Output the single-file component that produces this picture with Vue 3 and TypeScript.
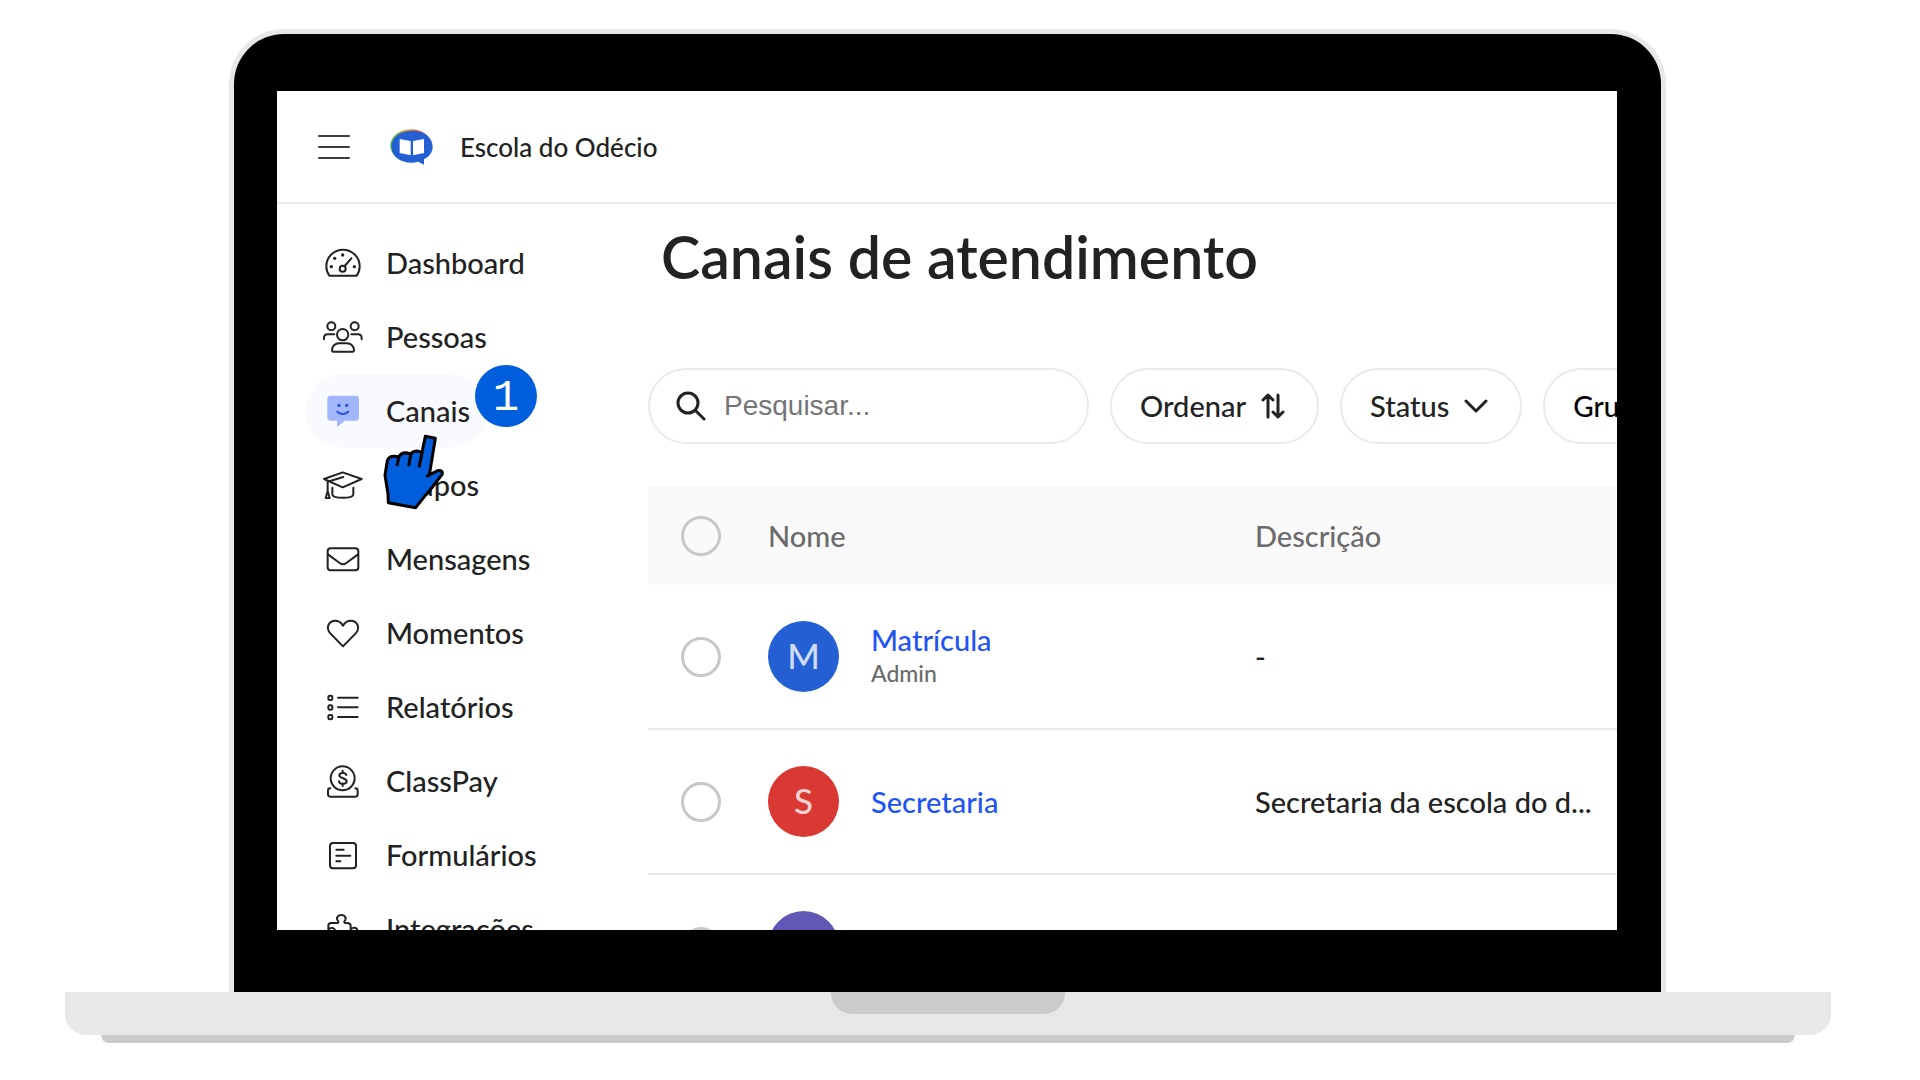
<script setup lang="ts">
import { ref } from 'vue'

interface NavItem {
  id: string
  label: string
}

interface Channel {
  initial: string
  name: string
  role?: string
  description: string
  tone: string
}

const activeId = ref('canais')
const search = ref('')

const navItems: NavItem[] = [
  { id: 'dashboard', label: 'Dashboard' },
  { id: 'pessoas', label: 'Pessoas' },
  { id: 'canais', label: 'Canais' },
  { id: 'grupos', label: 'Grupos' },
  { id: 'mensagens', label: 'Mensagens' },
  { id: 'momentos', label: 'Momentos' },
  { id: 'relatorios', label: 'Relatórios' },
  { id: 'classpay', label: 'ClassPay' },
  { id: 'formularios', label: 'Formulários' },
  { id: 'integracoes', label: 'Integrações' },
]

const channels: Channel[] = [
  { initial: 'M', name: 'Matrícula', role: 'Admin', description: '-', tone: 'blue' },
  { initial: 'S', name: 'Secretaria', description: 'Secretaria da escola do d...', tone: 'red' },
  { initial: '', name: '', description: '', tone: 'purple' },
]
</script>

<template>
  <div class="stage">
    <div class="lid">
      <div class="screen">
        <header class="topbar">
          <button class="menu" type="button" aria-label="Menu">
            <svg viewBox="0 0 32 26" width="32" height="26" stroke="#3c3c3c" stroke-width="2" stroke-linecap="round">
              <path d="M1 2H31M1 13H31M1 24H31" />
            </svg>
          </button>
          <svg class="logo" viewBox="0 0 129 108" width="43" height="36" aria-hidden="true">
            <defs>
              <linearGradient id="rim" x1="0" x2="1">
                <stop offset="0" stop-color="#35a853" />
                <stop offset="0.4" stop-color="#e5a62c" />
                <stop offset="0.75" stop-color="#d9402f" />
                <stop offset="1" stop-color="#245fd3" />
              </linearGradient>
            </defs>
            <ellipse cx="63" cy="50" rx="62" ry="49" fill="url(#rim)" />
            <path d="M66 5C101 5 128 24 128 53C128 69 118 83 102 91V107L84 98C78 100 72 101 66 101C30 101 5 81 5 53C5 25 31 5 66 5Z" fill="#245fd3" />
            <path d="M29 30L62 36V79L29 72ZM102 30L69 36V79L102 72Z" fill="#fff" />
          </svg>
          <span class="school">Escola do Odécio</span>
        </header>

        <div class="body">
          <nav class="sidebar">
            <a
              v-for="item in navItems"
              :key="item.id"
              href="#"
              class="nav-item"
              :class="{ active: item.id === activeId }"
              @click.prevent="activeId = item.id"
            >
              <svg class="nav-icon" viewBox="0 0 120 120" aria-hidden="true">
                <g v-if="item.id === 'dashboard'">
                  <path d="M19 98C13 90 10 81 10 70A50 50 0 0 1 110 70C110 81 107 90 101 98Z" />
                  <circle cx="59" cy="77" r="9" />
                  <path d="M65 69L85 46" />
                  <g class="solid">
                    <circle cx="25" cy="71" r="5" /><circle cx="35" cy="46" r="5" />
                    <circle cx="59" cy="36" r="5" /><circle cx="94" cy="71" r="5" />
                  </g>
                </g>
                <g v-else-if="item.id === 'pessoas'">
                  <circle cx="25" cy="28" r="12" /><circle cx="95" cy="28" r="12" />
                  <circle cx="59" cy="53" r="17" />
                  <path d="M3 67V63Q3 52 14 52H34M85 52H105Q116 52 116 63V67" />
                  <path d="M30 104H90Q93 104 93 100C93 86 82 79 72 79H48C38 79 27 86 27 100Q27 104 30 104Z" />
                </g>
                <g v-else-if="item.id === 'canais'">
                  <path class="bubble" d="M23 14H98Q108 14 108 24V79Q108 89 98 89H66L42 107V89H23Q13 89 13 79V24Q13 14 23 14Z" />
                  <circle class="eye" cx="48" cy="43" r="5" /><circle class="eye" cx="71" cy="43" r="5" />
                  <path class="smile" d="M43 62Q59 76 76 62" />
                </g>
                <g v-else-if="item.id === 'grupos'">
                  <path d="M59 22L116 42L59 67L3 42Z" />
                  <path d="M61 36L14 50V80M14 78L8 99H20L14 78" />
                  <path d="M28 68V88C30 102 89 102 91 88V68" />
                </g>
                <g v-else-if="item.id === 'mensagens'">
                  <rect x="14" y="28" width="92" height="66" rx="9" />
                  <path d="M15 46L50 72Q60 80 70 72L105 46" />
                </g>
                <g v-else-if="item.id === 'momentos'">
                  <path d="M60 100L22 61C7 45 17 23 37 23C47 23 55 29 60 38C65 29 73 23 83 23C103 23 113 45 98 61Z" />
                </g>
                <g v-else-if="item.id === 'relatorios'">
                  <rect x="16" y="26" width="12" height="13" rx="4" />
                  <rect x="16" y="55" width="12" height="13" rx="4" />
                  <rect x="16" y="84" width="12" height="13" rx="4" />
                  <path d="M45 32H104M45 61H104M45 90H104" />
                </g>
                <g v-else-if="item.id === 'classpay'">
                  <circle cx="59" cy="52" r="36" />
                  <path d="M70 42C68 34 49 34 49 43C49 54 71 49 71 61C71 71 49 71 48 61M59 29V36M59 68V75" />
                  <path d="M22 82Q15 82 15 89V100Q15 107 22 107H97Q104 107 104 100V89Q104 82 97 82" />
                </g>
                <g v-else-if="item.id === 'formularios'">
                  <rect x="21" y="24" width="78" height="76" rx="9" />
                  <path d="M40 44H62M40 62H82M40 79H52" />
                </g>
                <g v-else>
                  <path d="M16 70V50Q16 42 24 42H40Q49 42 45 36C38 27 45 18 55 18C65 18 72 27 65 36C61 42 68 42 72 42Q83 42 83 50V62C88 53 105 53 104 70M16 62C22 54 36 54 38 70" />
                </g>
              </svg>
              <span>{{ item.label }}</span>
              <template v-if="item.id === 'canais'">
                <span class="step">1</span>
                <svg class="hand" viewBox="250 640 183 228" aria-hidden="true">
                  <path
                    d="M377 647L407 653L389 763L414 750Q432 748 427 762L396 802L379 822L348 861L266 846L265 820L256 764L263 720Q270 702 297 709Q308 690 332 700Q347 684 367 696Z"
                    fill="#005ddb"
                  />
                  <path d="M298 706L292 736M334 698L327 736M368 692L358 740M389 763L380 768" />
                </svg>
              </template>
            </a>
          </nav>

          <main class="content">
            <h1>Canais de atendimento</h1>

            <div class="filters">
              <label class="search">
                <svg viewBox="0 0 30 30" width="30" height="30" fill="none" stroke="#222" stroke-width="3" stroke-linecap="round" aria-hidden="true">
                  <circle cx="12" cy="12" r="10" />
                  <path d="M20 20L28 28" />
                </svg>
                <input v-model="search" type="text" placeholder="Pesquisar..." aria-label="Pesquisar" />
              </label>
              <button class="pill" type="button">
                Ordenar
                <svg viewBox="0 0 24 26" width="24" height="26" fill="none" stroke="#222" stroke-width="3" stroke-linecap="round" stroke-linejoin="round" aria-hidden="true">
                  <path d="M7 24V2M2 7L7 2L12 7M17 2V24M12 19L17 24L22 19" />
                </svg>
              </button>
              <button class="pill" type="button" aria-haspopup="listbox">
                Status
                <svg viewBox="0 0 24 26" width="24" height="26" fill="none" stroke="#222" stroke-width="3" stroke-linecap="round" stroke-linejoin="round" aria-hidden="true">
                  <path d="M2 8L12 18L22 8" />
                </svg>
              </button>
              <button class="pill groups" type="button" aria-haspopup="listbox">Grupos</button>
            </div>

            <table>
              <colgroup>
                <col class="col-check" />
                <col class="col-name" />
                <col />
              </colgroup>
              <thead>
                <tr>
                  <th class="check"><input type="checkbox" aria-label="Selecionar todos" /></th>
                  <th>Nome</th>
                  <th>Descrição</th>
                </tr>
              </thead>
              <tbody>
                <tr v-for="channel in channels" :key="channel.tone">
                  <td class="check"><input type="checkbox" :aria-label="'Selecionar ' + channel.name" /></td>
                  <td>
                    <div class="channel">
                      <span class="avatar" :class="channel.tone">{{ channel.initial }}</span>
                      <div class="channel-text">
                        <a href="#">{{ channel.name }}</a>
                        <small v-if="channel.role">{{ channel.role }}</small>
                      </div>
                    </div>
                  </td>
                  <td>{{ channel.description }}</td>
                </tr>
              </tbody>
            </table>
          </main>
        </div>
      </div>
    </div>
    <div class="base"><div class="notch"></div></div>
    <div class="foot"></div>
  </div>
</template>

<style>
body {
  margin: 0;
  background: #fff;
}
</style>

<style scoped>
* {
  box-sizing: border-box;
}

.stage {
  padding: 29px 89px 0 65px;
  font-family: Lato, 'Liberation Sans', sans-serif;
  font-weight: 500;
  font-size: 29px;
  line-height: 36px;
  color: #222;
}

.lid {
  margin: 0 165px 0 164px;
  padding: 57px 44px 62px 43px;
  background: #000;
  border: 5px solid #e8e8e8;
  border-bottom: 0;
  border-radius: 55px 55px 0 0;
}

.screen {
  aspect-ratio: 1339 / 838;
  overflow: hidden;
  background: #fff;
}

.base {
  height: 43px;
  background: #e8e8e8;
  border-radius: 0 0 21px 21px;
}

.notch {
  width: 234px;
  height: 22px;
  margin: 0 auto;
  background: #cbcbcb;
  border-radius: 0 0 21px 21px;
}

.foot {
  height: 8px;
  margin: 0 36px;
  background: #cbcbcb;
  border-radius: 0 0 8px 8px;
}

button {
  font: inherit;
  color: inherit;
  background: none;
  border: 0;
  padding: 0;
}

svg {
  display: block;
  flex: none;
}

.topbar {
  display: flex;
  align-items: center;
  height: 113px;
  padding-left: 41px;
  border-bottom: 2px solid #ebebeb;
}

.logo {
  margin: 0 27px 0 40px;
}

.school {
  font-size: 26px;
}

.body {
  display: flex;
}

.sidebar {
  display: flex;
  flex: none;
  flex-direction: column;
  align-items: flex-start;
  width: 371px;
  padding: 22px 0 0 28px;
}

.nav-item {
  position: relative;
  display: flex;
  flex: none;
  align-items: center;
  gap: 23px;
  height: 74px;
  padding: 0 18px;
  border-radius: 37px;
  color: inherit;
  text-decoration: none;
}

.nav-item.active {
  z-index: 1;
  background: #f8fafd;
}

.nav-icon {
  width: 40px;
  height: 40px;
  fill: none;
  stroke: #222;
  stroke-width: 6;
  stroke-linecap: round;
  stroke-linejoin: round;
}

.solid {
  fill: #222;
  stroke: none;
}

.bubble {
  fill: #a2b6fc;
  stroke: none;
}

.eye {
  fill: #2450e6;
  stroke: none;
}

.smile {
  stroke: #2450e6;
}

.step {
  position: absolute;
  top: -9px;
  left: 170px;
  width: 62px;
  height: 62px;
  border-radius: 50%;
  background: #005ddb;
  color: #fff;
  font: 44px/66px 'Liberation Mono', monospace;
  text-align: center;
}

.hand {
  position: absolute;
  top: 60px;
  left: 78px;
  width: 61px;
  height: 76px;
  fill: none;
  stroke: #000;
  stroke-width: 9;
  stroke-linejoin: round;
}

.content {
  flex: 1;
  min-width: 0;
  padding-top: 19px;
}

h1 {
  margin: 0;
  padding-left: 13px;
  font-size: 59px;
  line-height: 68px;
  font-weight: 600;
  white-space: nowrap;
}

.filters {
  display: flex;
  gap: 21px;
  margin: 77px 0 42px;
  overflow: hidden;
}

.search,
.pill {
  display: flex;
  flex: none;
  align-items: center;
  height: 76px;
  border: 2px solid #eaeaea;
  border-radius: 38px;
}

.search {
  gap: 18px;
  width: 441px;
  padding: 0 26px;
}

.search input {
  flex: 1;
  min-width: 0;
  padding: 0;
  border: 0;
  outline: 0;
  background: none;
  font: 28px/36px 'Liberation Sans', sans-serif;
  color: #222;
}

.search input::placeholder {
  color: #757575;
}

.pill {
  gap: 15px;
  padding: 0 32px 0 28px;
}

.groups {
  color: #000;
  font-size: 28px;
}

table {
  width: 100%;
  table-layout: fixed;
  border-collapse: separate;
  border-spacing: 0;
}

.col-check {
  width: 120px;
}

.col-name {
  width: 487px;
}

th,
td {
  padding: 0;
  text-align: left;
  font-weight: inherit;
  white-space: nowrap;
}

th {
  height: 99px;
  background: #fafafa;
  color: #6b6b6b;
}

td {
  height: 145px;
  border-bottom: 2px solid #eaeaea;
}

.check {
  padding-left: 33px;
}

.check input {
  display: block;
  width: 40px;
  height: 40px;
  margin: 0;
  appearance: none;
  border: 3px solid #c8c8c8;
  border-radius: 50%;
}

.channel {
  display: flex;
  align-items: center;
  gap: 32px;
}

.avatar {
  width: 71px;
  height: 71px;
  border-radius: 50%;
  color: rgba(255, 255, 255, 0.8);
  font-size: 35px;
  line-height: 68px;
  text-align: center;
}

.blue {
  background: #245fd3;
}

.red {
  background: #da3832;
}

.purple {
  background: #6257b5;
}

.channel-text {
  display: flex;
  flex-direction: column;
}

.channel-text a {
  color: #1f55f5;
  text-decoration: none;
}

.channel-text small {
  padding-bottom: 4px;
  color: #6b6b6b;
  font-size: 23px;
  line-height: 30px;
}
</style>
